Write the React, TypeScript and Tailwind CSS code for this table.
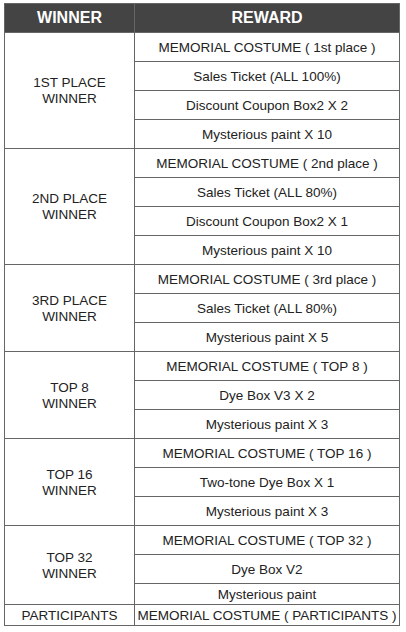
const groups: { winner: string[]; rewards: string[]; short?: boolean }[] = [
  {
    winner: ["1ST PLACE", "WINNER"],
    rewards: [
      "MEMORIAL COSTUME ( 1st place )",
      "Sales Ticket (ALL 100%)",
      "Discount Coupon Box2 X 2",
      "Mysterious paint X 10",
    ],
  },
  {
    winner: ["2ND PLACE", "WINNER"],
    rewards: [
      "MEMORIAL COSTUME ( 2nd place )",
      "Sales Ticket (ALL 80%)",
      "Discount Coupon Box2 X 1",
      "Mysterious paint X 10",
    ],
  },
  {
    winner: ["3RD PLACE", "WINNER"],
    rewards: [
      "MEMORIAL COSTUME ( 3rd place )",
      "Sales Ticket (ALL 80%)",
      "Mysterious paint X 5",
    ],
  },
  {
    winner: ["TOP 8", "WINNER"],
    rewards: ["MEMORIAL COSTUME ( TOP 8 )", "Dye Box V3 X 2", "Mysterious paint X 3"],
  },
  {
    winner: ["TOP 16", "WINNER"],
    rewards: ["MEMORIAL COSTUME ( TOP 16 )", "Two-tone Dye Box X 1", "Mysterious paint X 3"],
  },
  {
    winner: ["TOP 32", "WINNER"],
    rewards: ["MEMORIAL COSTUME ( TOP 32 )", "Dye Box V2", "Mysterious paint"],
    short: true,
  },
];

export default function App() {
  return (
    <div className="w-[406px] h-[632px] bg-white pt-[3px] pl-[4px] font-['Liberation_Sans',Arial,sans-serif] text-[13.5px] text-[#222]">
      <table className="w-[395px] border-collapse table-fixed">
        <colgroup>
          <col className="w-[130px]" />
          <col className="w-[265px]" />
        </colgroup>
        <thead>
          <tr className="h-[29px] bg-[#444444] text-white text-[16px] font-bold">
            <th className="border border-[#666] p-0 leading-[18px]">WINNER</th>
            <th className="border border-[#666] p-0 leading-[18px]">REWARD</th>
          </tr>
        </thead>
        <tbody>
          {groups.map((g) =>
            g.rewards.map((r, i) => (
              <tr key={g.winner[0] + i} className={g.short && i === 2 ? "h-[21px]" : "h-[29px]"}>
                {i === 0 && (
                  <td rowSpan={g.rewards.length} className="border border-[#666] p-0 pt-px text-center leading-[16px]">
                    {g.winner[0]}
                    <br />
                    {g.winner[1]}
                  </td>
                )}
                <td className="border border-[#666] p-0 pt-px text-center leading-[16px]">{r}</td>
              </tr>
            ))
          )}
          <tr className="h-[21px]">
            <td className="border border-[#666] p-0 pt-px text-center leading-[16px]">PARTICIPANTS</td>
            <td className="border border-[#666] p-0 pt-px text-center leading-[16px]">MEMORIAL COSTUME ( PARTICIPANTS )</td>
          </tr>
        </tbody>
      </table>
    </div>
  );
}
